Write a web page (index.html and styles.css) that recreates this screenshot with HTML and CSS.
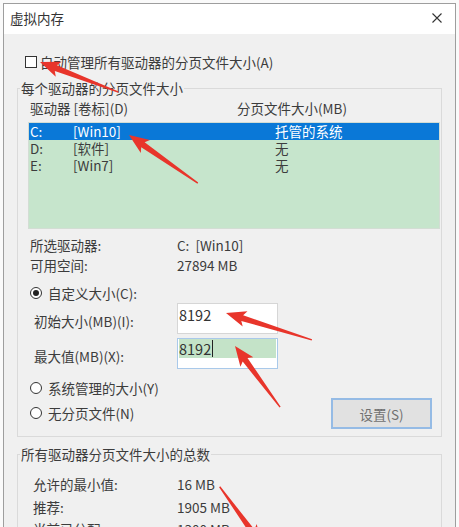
FILE: index.html
```html
<!DOCTYPE html>
<html lang="zh-CN">
<head>
<meta charset="utf-8">
<title>虚拟内存</title>
<link rel="stylesheet" href="styles.css">
</head>
<body>
<div class="window">
  <div class="titlebar">
    <span class="title">虚拟内存</span>
    <svg class="close" width="10" height="10" viewBox="0 0 10 10"><path d="M0.5 0.5 L9.5 9.5 M9.5 0.5 L0.5 9.5" stroke="#333" stroke-width="1.1" fill="none"/></svg>
  </div>
  <div class="content">
    <div class="check-row"><span class="checkbox"></span><span>自动管理所有驱动器的分页文件大小(A)</span></div>

    <fieldset class="group">
      <legend>每个驱动器的分页文件大小</legend>
      <div class="header"><span class="h1">驱动器 [卷标](D)</span><span>分页文件大小(MB)</span></div>
      <div class="listbox">
        <div class="row sel"><span class="c1">C:</span><span class="c2">[Win10]</span><span>托管的系统</span></div>
        <div class="row"><span class="c1">D:</span><span class="c2">[软件]</span><span>无</span></div>
        <div class="row"><span class="c1">E:</span><span class="c2">[Win7]</span><span>无</span></div>
      </div>
      <div class="info">
        <span>所选驱动器:</span><span>C:&nbsp; [Win10]</span>
        <span>可用空间:</span><span>27894 MB</span>
      </div>
      <div class="radio-row first"><span class="radio on"></span><span>自定义大小(C):</span></div>
      <div class="size-grid">
        <span class="size-label">初始大小(MB)(I):</span>
        <div class="input"><span class="val">8192</span></div>
        <span class="size-label">最大值(MB)(X):</span>
        <div class="input focus"><div class="hl"><span class="val">8192</span><span class="caret"></span></div></div>
      </div>
      <div class="bottom">
        <div class="radios">
          <div class="radio-row"><span class="radio"></span><span>系统管理的大小(Y)</span></div>
          <div class="radio-row"><span class="radio"></span><span>无分页文件(N)</span></div>
        </div>
        <button class="btn">设置(S)</button>
      </div>
    </fieldset>

    <fieldset class="group g2">
      <legend>所有驱动器分页文件大小的总数</legend>
      <div class="totals">
        <span>允许的最小值:</span><span>16 MB</span>
        <span>推荐:</span><span>1905 MB</span>
        <span>当前已分配:</span><span>1300 MB</span>
      </div>
    </fieldset>
  </div>
</div>

<svg class="arrows" width="459" height="527" viewBox="0 0 459 527">
  <g fill="#e8352b">
    <polygon transform="translate(40,62) rotate(21)" points="0,0 20,-8 17,-3 84,-0.7 84,0.7 17,3 20,8"/>
    <polygon transform="translate(129,135) rotate(35)" points="0,0 20,-8 17,-3 84,-0.7 84,0.7 17,3 20,8"/>
    <polygon transform="translate(226,313) rotate(17.4)" points="0,0 20,-8 17,-3 90,-0.7 90,0.7 17,3 20,8"/>
    <polygon transform="translate(235,346) rotate(53.6)" points="0,0 20,-8 17,-3 76,-0.7 76,0.7 17,3 20,8"/>
    <polygon transform="translate(262,545) rotate(234)" points="0,0 20,-8 17,-3 72,-0.7 72,0.7 17,3 20,8"/>
  </g>
</svg>
</body>
</html>
```

FILE: styles.css
```css
* { box-sizing: border-box; }
html, body { margin: 0; padding: 0; }
body {
  width: 459px;
  height: 527px;
  overflow: hidden;
  position: relative;
  background: #fafafa;
  font-family: "Noto Sans CJK SC", "Noto Sans", sans-serif;
  font-size: 13.5px;
  color: #3c3c3c;
}
.window {
  margin: 3px 0 0 3px;
  width: 453px;
  border: 1px solid #9e9e9e;
  background: #f0f0f0;
}
.titlebar {
  height: 30px;
  background: #fff;
  display: flex;
  align-items: center;
  justify-content: space-between;
  padding: 0 13px 2px 6px;
}
.title { line-height: 20px; color: #333; }
.close { display: block; }

.content { padding: 18px 13px 0; }
.check-row {
  display: flex;
  align-items: center;
  gap: 3px;
  line-height: 20px;
  margin-left: 8px;
}
.checkbox {
  flex: none;
  width: 12px;
  height: 12px;
  border: 1px solid #333;
  background: #fff;
}

.group {
  margin: 6px 0 0;
  padding: 0 0 7px;
  border: 1px solid #dadada;
  min-width: 0;
}
.group legend {
  padding: 0 1px;
  margin-left: 2px;
  line-height: 20px;
}
.header {
  display: flex;
  line-height: 20px;
  padding-left: 12px;
}
.h1 { width: 207px; }
.listbox {
  margin: 4px 1px 0 10px;
  height: 107px;
  border: 1px solid #d3ddd4;
  background: #c6e5cc;
}
.row {
  display: flex;
  height: 17px;
  line-height: 17px;
  padding-left: 1px;
}
.row.sel { background: #0a78d7; color: #fff; }
.c1 { width: 43px; }
.c2 { width: 202px; }

.info {
  display: grid;
  grid-template-columns: 147px auto;
  line-height: 20px;
  padding-left: 12px;
  margin-top: 6px;
}
.radio-row {
  display: flex;
  align-items: center;
  gap: 6px;
  line-height: 20px;
}
.radio-row.first { margin-top: 8px; padding-left: 12px; }
.radio {
  flex: none;
  width: 12px;
  height: 12px;
  border: 1px solid #333;
  border-radius: 50%;
  background: #fff;
  display: flex;
  align-items: center;
  justify-content: center;
}
.radio.on::after {
  content: "";
  width: 6px;
  height: 6px;
  border-radius: 50%;
  background: #222;
}

.size-grid {
  display: grid;
  grid-template-columns: 143px 101px;
  grid-auto-rows: 31px;
  row-gap: 4px;
  padding-left: 16px;
}
.size-label { padding-top: 8px; line-height: 20px; }
.input {
  border: 1px solid #d6d6d6;
  background: #fff;
  padding: 1px 1px;
  font-size: 14.5px;
  line-height: 19px;
  color: #333;
}
.input.focus {
  border-color: #a9c9ea;
  padding: 0 1px;
}
.hl {
  display: flex;
  align-items: center;
  height: 19px;
  background: #c4e3c8;
}
.caret {
  width: 1px;
  height: 17px;
  background: #222;
  margin-left: 1px;
}

.bottom {
  display: flex;
  justify-content: space-between;
  align-items: flex-start;
  margin-top: 9px;
  padding-left: 12px;
}
.radios {
  display: flex;
  flex-direction: column;
  gap: 5px;
}
.btn {
  margin: 20px 9px 0 0;
  width: 101px;
  height: 31px;
  border: 2px solid #95bbe5;
  background: #e1e1e1;
  color: #707070;
  font-family: inherit;
  font-size: 13.5px;
  padding: 0;
}

.g2 { margin-top: 7px; }
.totals {
  display: grid;
  grid-template-columns: 144px auto;
  line-height: 22.5px;
  padding: 9px 0 0 15px;
}

.arrows {
  position: absolute;
  left: 0;
  top: 0;
  pointer-events: none;
}
```
